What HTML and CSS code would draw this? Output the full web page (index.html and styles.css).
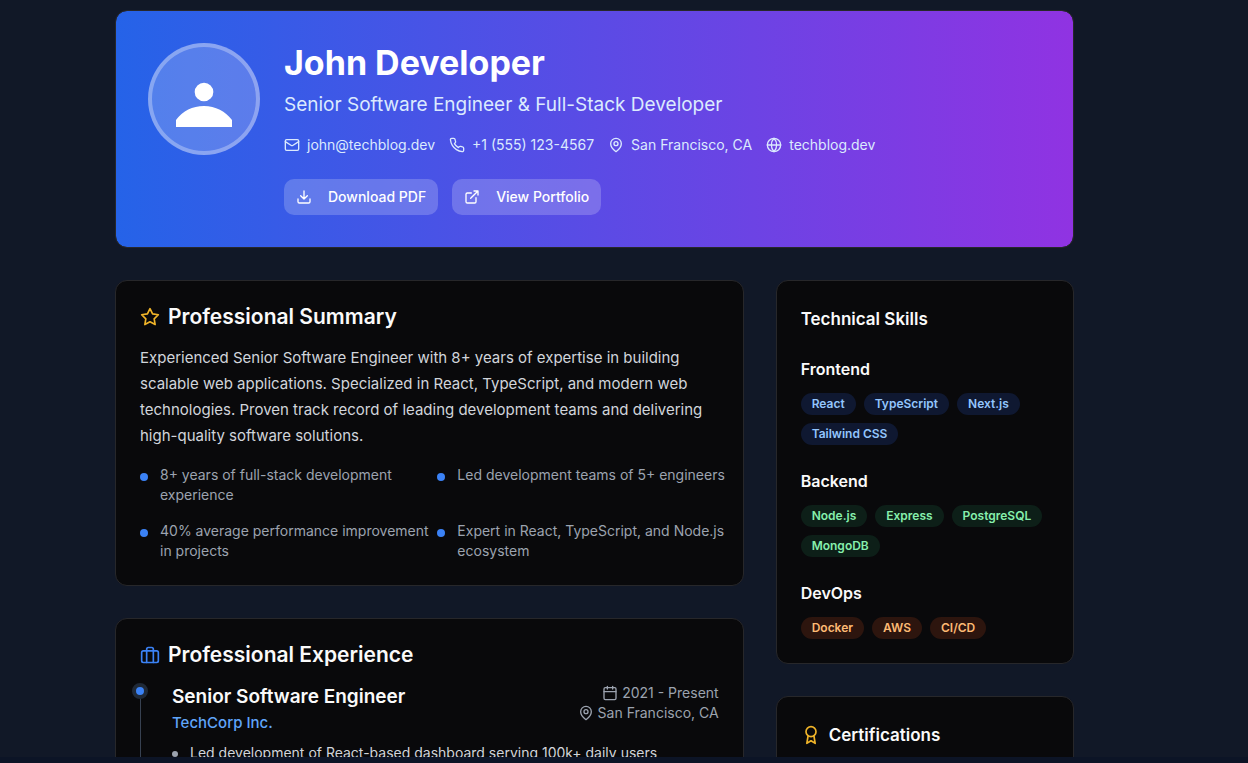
FILE: index.html
```html
<!DOCTYPE html>
<html lang="en">
<head>
<meta charset="utf-8">
<meta name="viewport" content="width=device-width, initial-scale=1">
<title>John Developer – Resume</title>
<link rel="stylesheet" href="styles.css">
</head>
<body>
<svg width="0" height="0" class="sprite" aria-hidden="true">
  <symbol id="pin" viewBox="0 0 24 24"><path d="M20 10c0 6-8 12-8 12s-8-6-8-12a8 8 0 0 1 16 0Z"/><circle cx="12" cy="10" r="3"/></symbol>
</svg>
<main class="page">
  <div class="container">
    <header class="hero">
      <div class="avatar">
        <svg viewBox="0 0 24 24" fill="currentColor" aria-hidden="true"><path d="M24 20.993V24H0v-2.996A14.977 14.977 0 0112.004 15c4.904 0 9.26 2.354 11.996 5.993zM16.002 8.999a4 4 0 11-8 0 4 4 0 018 0z"/></svg>
      </div>
      <div class="hero-info">
        <h1>John Developer</h1>
        <p class="role">Senior Software Engineer &amp; Full-Stack Developer</p>
        <ul class="contacts">
          <li><svg class="icon" viewBox="0 0 24 24"><rect x="2" y="4" width="20" height="16" rx="2"/><path d="m22 7-8.970 5.700a1.940 1.940 0 0 1-2.060 0L2 7"/></svg>john@techblog.dev</li>
          <li><svg class="icon" viewBox="0 0 24 24"><path d="M22 16.920v3a2 2 0 0 1-2.180 2 19.790 19.790 0 0 1-8.630-3.070 19.500 19.500 0 0 1-6-6 19.790 19.790 0 0 1-3.070-8.670A2 2 0 0 1 4.110 2h3a2 2 0 0 1 2 1.720 12.840 12.840 0 0 0 .7 2.810 2 2 0 0 1-.45 2.110L8.090 9.910a16 16 0 0 0 6 6l1.270-1.270a2 2 0 0 1 2.110-.45 12.840 12.840 0 0 0 2.810.7A2 2 0 0 1 22 16.920z"/></svg>+1 (555) 123-4567</li>
          <li><svg class="icon"><use href="#pin"/></svg>San Francisco, CA</li>
          <li><svg class="icon" viewBox="0 0 24 24"><circle cx="12" cy="12" r="10"/><path d="M12 2a14.500 14.500 0 0 0 0 20 14.500 14.500 0 0 0 0-20M2 12h20"/></svg>techblog.dev</li>
        </ul>
        <div class="actions">
          <button type="button" class="btn"><svg class="icon" viewBox="0 0 24 24"><path d="M21 15v4a2 2 0 0 1-2 2H5a2 2 0 0 1-2-2v-4M7 10l5 5 5-5M12 15V3"/></svg>Download PDF</button>
          <button type="button" class="btn"><svg class="icon" viewBox="0 0 24 24"><path d="M15 3h6v6M10 14 21 3M18 13v6a2 2 0 0 1-2 2H5a2 2 0 0 1-2-2V8a2 2 0 0 1 2-2h6"/></svg>View Portfolio</button>
        </div>
      </div>
    </header>

    <div class="columns">
      <div class="column column-main">
        <section class="card">
          <h2 class="title"><svg class="icon icon-lg gold" viewBox="0 0 24 24"><path d="m12 2 3.090 6.260L22 9.270l-5 4.870 1.180 6.880L12 17.770l-6.180 3.250L7 14.140 2 9.270l6.910-1.010L12 2z"/></svg>Professional Summary</h2>
          <p class="summary">Experienced Senior Software Engineer with 8+ years of expertise in building scalable web applications. Specialized in React, TypeScript, and modern web technologies. Proven track record of leading development teams and delivering high-quality software solutions.</p>
          <ul class="highlights">
            <li>8+ years of full-stack development experience</li>
            <li>Led development teams of 5+ engineers</li>
            <li>40% average performance improvement in projects</li>
            <li>Expert in React, TypeScript, and Node.js ecosystem</li>
          </ul>
        </section>
        <section class="card">
          <h2 class="title"><svg class="icon icon-lg blue" viewBox="0 0 24 24"><rect x="2" y="7" width="20" height="14" rx="2"/><path d="M16 21V5a2 2 0 0 0-2-2h-4a2 2 0 0 0-2 2v16"/></svg>Professional Experience</h2>
          <article class="job">
            <div class="job-head">
              <div>
                <h3>Senior Software Engineer</h3>
                <p class="company">TechCorp Inc.</p>
              </div>
              <div class="meta">
                <span><svg class="icon" viewBox="0 0 24 24"><rect x="3" y="4" width="18" height="18" rx="2"/><path d="M16 2v4M8 2v4M3 10h18"/></svg>2021 - Present</span>
                <span><svg class="icon"><use href="#pin"/></svg>San Francisco, CA</span>
              </div>
            </div>
            <ul class="duties">
              <li>Led development of React-based dashboard serving 100k+ daily users</li>
            </ul>
          </article>
        </section>
      </div>

      <aside class="column">
        <section class="card skills">
          <h2 class="subtitle">Technical Skills</h2>
          <div>
            <h3>Frontend</h3>
            <ul class="badges badges-blue"><li>React</li><li>TypeScript</li><li>Next.js</li><li>Tailwind CSS</li></ul>
          </div>
          <div>
            <h3>Backend</h3>
            <ul class="badges badges-green"><li>Node.js</li><li>Express</li><li>PostgreSQL</li><li>MongoDB</li></ul>
          </div>
          <div>
            <h3>DevOps</h3>
            <ul class="badges badges-orange"><li>Docker</li><li>AWS</li><li>CI/CD</li></ul>
          </div>
        </section>
        <section class="card">
          <h2 class="subtitle"><svg class="icon icon-lg gold" viewBox="0 0 24 24"><circle cx="12" cy="8" r="6"/><path d="M15.477 12.890 17 22l-5-3-5 3 1.523-9.110"/></svg>Certifications</h2>
        </section>
      </aside>
    </div>
  </div>
</main>
<div class="bottom-strip"></div>
</body>
</html>
```

FILE: styles.css
```css
*, *::before, *::after { box-sizing: border-box; }
body {
  margin: 0;
  height: 100vh;
  display: flex;
  flex-direction: column;
  background: #111827;
  color: #fafafa;
  font-family: Inter, "Liberation Sans", sans-serif;
  font-size: 14px;
  line-height: 20px;
}
h1, h2, h3, p, ul { margin: 0; padding: 0; }
ul { list-style: none; }
.sprite { position: absolute; }

.page {
  flex: 1;
  min-height: 0;
  overflow-y: auto;
  scrollbar-width: none;
  padding: 10px 174px 0 115px;
}
.bottom-strip { flex: none; height: 6px; background: #0c1426; }
.container, .columns, .column { display: grid; gap: 32px; }
.columns { grid-template-columns: repeat(3, minmax(0, 1fr)); align-items: start; }
.column-main { grid-column: span 2; }

.icon {
  flex: none;
  width: 16px;
  height: 16px;
  fill: none;
  stroke: currentColor;
  stroke-width: 2;
  stroke-linecap: round;
  stroke-linejoin: round;
}
.icon-lg { width: 20px; height: 20px; }
.gold { color: #f0b429; }
.blue { color: #3b82f6; }

.hero {
  display: flex;
  gap: 24px;
  padding: 32px;
  border: 1px solid #27272a;
  border-radius: 12px;
  background: linear-gradient(to right, #2563e8, #9033e2) padding-box;
}
.avatar {
  flex: none;
  display: grid;
  place-items: center;
  width: 112px;
  height: 112px;
  border: 4px solid rgba(255, 255, 255, .3);
  border-radius: 50%;
  background: rgba(255, 255, 255, .2);
  color: #fff;
}
.avatar svg { width: 56px; height: 56px; }
.hero h1 { margin-bottom: 8px; font-size: 34px; line-height: 40px; font-weight: 700; color: #fff; }
.role { margin-bottom: 16px; font-size: 19px; line-height: 28px; color: #dbeafe; }
.contacts { display: flex; flex-wrap: wrap; gap: 14px; margin-bottom: 24px; color: #dbeafe; }
.contacts li { display: flex; align-items: center; gap: 7px; }
.actions { display: flex; gap: 14px; }
.btn {
  display: flex;
  align-items: center;
  gap: 16px;
  height: 36px;
  padding: 0 12px;
  border: 0;
  border-radius: 10px;
  background: rgba(255, 255, 255, .2);
  color: #fff;
  font: 500 14px/20px Inter, "Liberation Sans", sans-serif;
}

.card {
  padding: 24px;
  border: 1px solid #27272a;
  border-radius: 12px;
  background: #09090b;
}
.title, .subtitle { display: flex; align-items: center; gap: 8px; font-weight: 600; }
.title { margin-bottom: 16px; font-size: 21px; line-height: 24px; }
.subtitle { font-size: 17px; line-height: 28px; }
.summary { margin-bottom: 16px; font-size: 15px; line-height: 26px; color: #d1d5db; }
.highlights {
  display: grid;
  grid-template-columns: 1fr 1fr;
  gap: 16px 8px;
  margin-right: -8px;
  color: #9ca3af;
}
.highlights li, .duties li { display: flex; gap: 12px; }
.highlights li::before, .duties li::before {
  content: "";
  flex: none;
  width: 8px;
  height: 8px;
  margin-top: 8px;
  border-radius: 50%;
  background: #3b82f6;
}

.job { position: relative; padding-left: 32px; }
.job::before {
  content: "";
  position: absolute;
  top: 8px;
  bottom: -32px;
  left: 0;
  width: 1px;
  background: #374151;
}
.job::after {
  content: "";
  position: absolute;
  top: 0;
  left: -8px;
  width: 16px;
  height: 16px;
  border: 4px solid #1f2937;
  border-radius: 50%;
  background: #3b82f6;
}
.job-head { display: flex; justify-content: space-between; margin-bottom: 8px; }
.job h3 { font-size: 19px; line-height: 28px; font-weight: 600; }
.company { font-size: 15px; line-height: 24px; font-weight: 500; color: #60a5fa; }
.meta { display: flex; flex-direction: column; align-items: flex-end; color: #9ca3af; }
.meta span { display: flex; align-items: center; gap: 4px; }
.duties { color: #d1d5db; }
.duties li::before { width: 6px; height: 6px; background: #9ca3af; }

.skills { display: grid; gap: 24px; }
.skills h3 { margin-bottom: 12px; font-size: 16px; line-height: 24px; font-weight: 600; }
.badges { display: flex; flex-wrap: wrap; gap: 8px; }
.badges li {
  padding: 3px 11px;
  border-radius: 11px;
  font-size: 12px;
  line-height: 16px;
  font-weight: 600;
}
.badges-blue li { background: #0f1831; color: #93c5fd; }
.badges-green li { background: #0d1f18; color: #86efac; }
.badges-orange li { background: #2d150e; color: #fdba74; }
```
